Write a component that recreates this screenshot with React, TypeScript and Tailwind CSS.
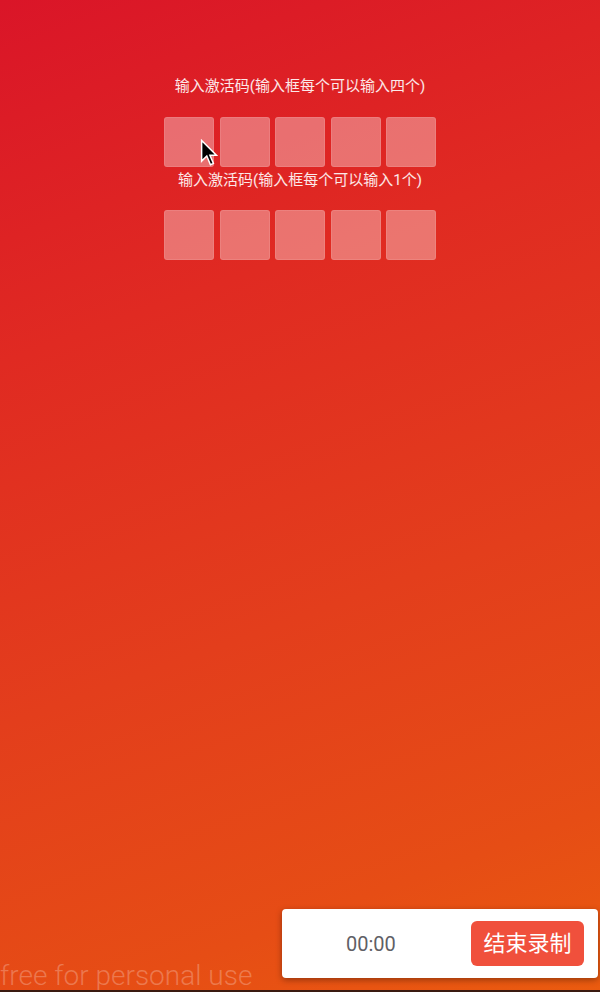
import React from "react";

const font = { fontFamily: '"Roboto", "Noto Sans CJK SC", sans-serif' };

function CodeRow() {
  return (
    <div className="flex gap-[5.5px]">
      {[0, 1, 2, 3, 4].map((i) => (
        <div
          key={i}
          className="w-[50px] h-[50px] rounded-[3px] bg-white/35 border border-white/10"
        />
      ))}
    </div>
  );
}

export default function App() {
  return (
    <div
      className="relative w-[600px] h-[992px] overflow-hidden bg-[linear-gradient(160deg,#da1528_0%,#e02a22_30%,#e33e1c_60%,#e64d15_85%,#ea5b0f_100%)]"
      style={font}
    >
      <div className="flex flex-col items-center pt-[76px]">
        <p className="text-[15px] leading-[20px] text-white/90">输入激活码(输入框每个可以输入四个)</p>
        <div className="mt-[21px]">
          <CodeRow />
        </div>
        <p className="mt-[3px] text-[15px] leading-[20px] text-white/90">输入激活码(输入框每个可以输入1个)</p>
        <div className="mt-[20px]">
          <CodeRow />
        </div>
      </div>

      <svg className="absolute left-[200px] top-[139px]" width="18" height="28" viewBox="0 0 12 19">
        <path d="M1 1 L1 15 L4.5 11.5 L7 17.5 L9 16.6 L6.6 11 L11 11 Z" fill="#000" stroke="#fff" strokeWidth="1" />
      </svg>

      <div className="absolute left-0 bottom-[2px] text-[28px] font-light text-white/25 leading-none">
        free for personal use
      </div>

      <div className="absolute left-[282px] top-[909px] w-[316px] h-[69px] bg-white rounded-[4px] shadow-[0_2px_6px_rgba(0,0,0,0.35)] flex items-center">
        <div className="ml-[64px] text-[20px] text-[#5f5f66]">00:00</div>
        <div className="flex-1" />
        <button className="mr-[14px] w-[113px] h-[45px] rounded-[6px] bg-[#f0503c] text-white text-[22px]">
          结束录制
        </button>
      </div>

      <div className="absolute left-0 bottom-0 w-full h-[2px] bg-[#3a1a10]" />
    </div>
  );
}
